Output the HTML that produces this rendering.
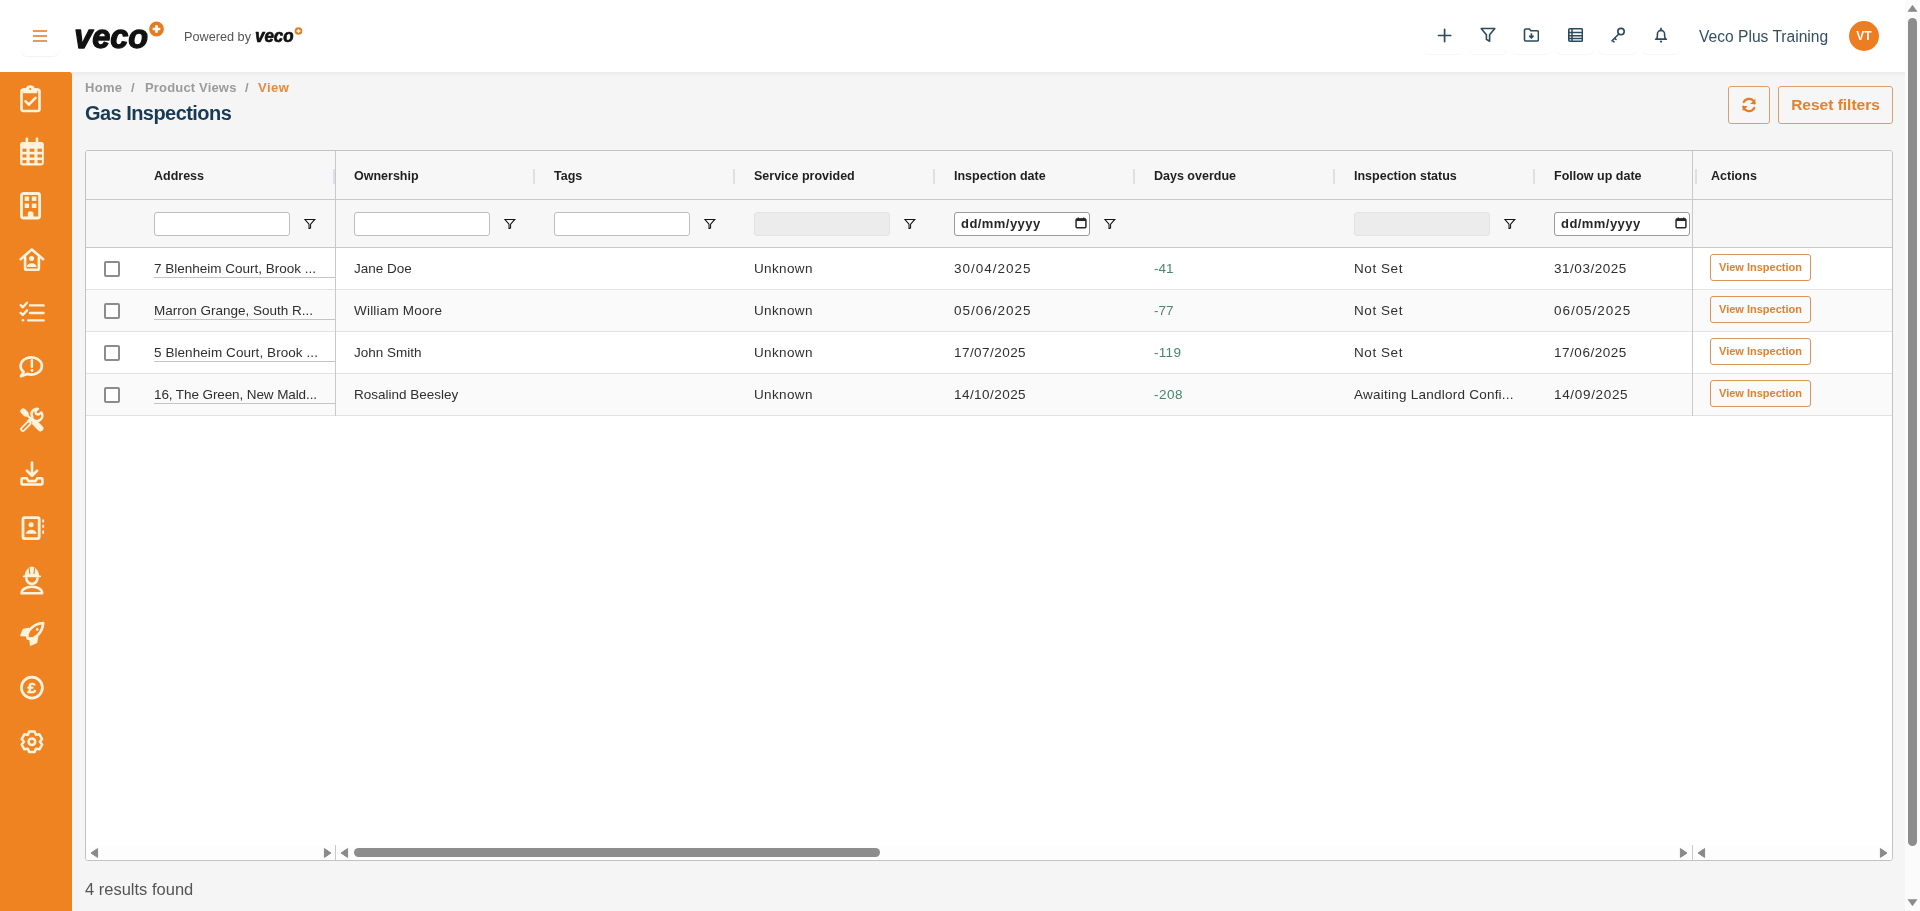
<!DOCTYPE html>
<html><head><meta charset="utf-8">
<style>
*{box-sizing:border-box;margin:0;padding:0}
html,body{width:1920px;height:911px;overflow:hidden;background:#f5f5f5;font-family:"Liberation Sans",sans-serif;color:#333;-webkit-font-smoothing:antialiased}
body>*{will-change:transform}
.abs{position:absolute}
#hdr{position:absolute;left:0;top:0;width:1905px;height:72px;background:#fff}
#side{position:absolute;left:0;top:72px;width:72px;height:839px;background:#ef8322;border-top-right-radius:3px}
#vscroll{position:absolute;left:1905px;top:0;width:15px;height:911px;background:#fbfbfb}
.hbtn{position:absolute;top:16px;width:38px;height:38px;border-radius:5px;background:#fff;box-shadow:0 1px 1px rgba(0,0,0,.045)}
.hbtn svg{position:absolute;left:11px;top:11px}
.sico{position:absolute;left:20px;width:24px;height:24px}
.bc{position:absolute;top:79.8px;font-size:13px;font-weight:bold;color:#9b9b9b;white-space:nowrap}
.title{position:absolute;left:85px;top:101.6px;font-size:20px;letter-spacing:-.55px;font-weight:bold;color:#173a55;white-space:nowrap}
.obtn{position:absolute;top:86px;height:38px;border:1px solid #d9a06c;border-radius:3px;color:#e2812f;font-weight:bold;font-size:15.5px;background:#f6f6f7}
#tbl{position:absolute;left:85px;top:150px;width:1808px;height:711px;background:#fff;border:1px solid #c2c2c5;border-radius:3px;overflow:hidden}
.hrow{position:absolute;left:0;top:0;width:1806px;height:49px;background:#f7f7f8;border-bottom:1px solid #c9c9cc}
.frow{position:absolute;left:0;top:49px;width:1806px;height:48px;background:#f7f7f8;border-bottom:1px solid #c9c9cc}
.drow{position:absolute;left:0;width:1806px;height:42px;border-bottom:1px solid #e2e2e4}
.th{position:absolute;top:18px;font-size:12.5px;font-weight:bold;color:#1f1f1f;white-space:nowrap}
.grip{position:absolute;top:18px;width:2px;height:15px;background:#dfe0e3}
.inp{position:absolute;top:12px;width:136px;height:24px;background:#fff;border:1px solid #bfbfc2;border-radius:3px}
.inp.dis{background:#ececed;border-color:#e3e3e5}
.fic{position:absolute;top:19px}
.td{position:absolute;top:13px;font-size:13.5px;color:#2f2f2f;white-space:nowrap}
.cb{position:absolute;left:18px;top:13px;width:16px;height:16px;border:2px solid #8c8c8c;border-radius:2px;background:#fff}
.vi{position:absolute;left:1624px;top:6px;width:101px;height:27px;border:1px solid #d9955a;border-radius:3px;font-size:11px;font-weight:bold;color:#e2822e;text-align:center;line-height:25px;white-space:nowrap}
.inp.date{border-color:#9a9a9d}
.dtxt{position:absolute;left:6px;top:2.6px;font-size:13px;font-weight:bold;color:#262626;letter-spacing:.45px}
.uline{position:absolute;left:68px;top:29px;width:181px;height:1px;background:#c4c4c6}
.vline{position:absolute;top:0;width:1px;background:#c9c9cc}
</style></head><body>

<div id="hdr">
  <div class="abs" style="left:21px;top:16px;width:38px;height:40px;border-radius:6px;background:#fff;box-shadow:0 1px 1px rgba(0,0,0,.05)">
    <div class="abs" style="left:12px;top:14px;width:14px;height:1.5px;background:#e59a5c"></div>
    <div class="abs" style="left:12px;top:19px;width:14px;height:1.5px;background:#e59a5c"></div>
    <div class="abs" style="left:12px;top:24px;width:14px;height:1.5px;background:#e59a5c"></div>
  </div>
  <svg class="abs" style="left:72px;top:15px" width="96" height="40" viewBox="0 0 96 40">
    <text x="2.2" y="33.3" font-family="Liberation Sans" font-weight="bold" font-style="italic" font-size="34" textLength="74" lengthAdjust="spacingAndGlyphs" fill="#111" stroke="#111" stroke-width="1.3" stroke-linejoin="round">veco</text>
    <circle cx="84.5" cy="14" r="7.4" fill="#e9791c"/>
    <path d="M84.5 10.2v7.6M80.7 14h7.6" stroke="#fff" stroke-width="2.6"/>
  </svg>
  <div class="abs" style="left:184px;top:29.8px;font-size:12.7px;color:#555;white-space:nowrap">Powered by</div>
  <svg class="abs" style="left:254px;top:24px" width="52" height="20" viewBox="0 0 52 20">
    <text x="1" y="17.6" font-family="Liberation Sans" font-weight="bold" font-style="italic" font-size="18" textLength="38.5" lengthAdjust="spacingAndGlyphs" fill="#111" stroke="#111" stroke-width="0.7" stroke-linejoin="round">veco</text>
    <circle cx="44.5" cy="7" r="3.8" fill="#e9791c"/>
    <path d="M44.5 5v4M42.5 7h4" stroke="#fff" stroke-width="1.3"/>
  </svg>
  <div class="hbtn" style="left:1425px"><svg width="16" height="16" viewBox="0 0 16 16"><path d="M8.6 2.4v12.2M2.5 8.5h12.2" stroke="#2c4a5b" stroke-width="1.7" stroke-linecap="round"/></svg></div>
  <div class="hbtn" style="left:1469px"><svg width="16" height="16" viewBox="0 0 16 16"><path d="M1.2 1.5h13.6L9.6 7.8v6.4L6.4 12.4V7.8Z" fill="none" stroke="#2c4a5b" stroke-width="1.6" stroke-linejoin="round"/></svg></div>
  <div class="hbtn" style="left:1512px"><svg width="16" height="16" viewBox="0 0 16 16"><path d="M1.5 3.2a1.2 1.2 0 0 1 1.2-1.2h3.6l1.6 1.8h6.3a1.2 1.2 0 0 1 1.2 1.2v7.8a1.2 1.2 0 0 1-1.2 1.2H2.7a1.2 1.2 0 0 1-1.2-1.2Z" fill="none" stroke="#2c4a5b" stroke-width="1.6" stroke-linejoin="round"/><path d="M8.4 6.3v4.2" stroke="#2c4a5b" stroke-width="1.6"/><path d="M6.3 8.6L8.4 10.8l2.1-2.2" fill="none" stroke="#2c4a5b" stroke-width="1.6"/></svg></div>
  <div class="hbtn" style="left:1556px"><svg width="16" height="16" viewBox="0 0 16 16"><rect x="1.8" y="1.8" width="13.6" height="12.4" rx="1" fill="none" stroke="#2c4a5b" stroke-width="1.6"/><path d="M1.8 5.6h13.6M1.8 8.8h13.6M1.8 11.6h13.6M5 1.8v12.4" stroke="#2c4a5b" stroke-width="1.5"/></svg></div>
  <div class="hbtn" style="left:1599px"><svg width="16" height="16" viewBox="0 0 16 16"><circle cx="11" cy="4.6" r="3.2" fill="none" stroke="#2c4a5b" stroke-width="1.6"/><path d="M8.8 7L2 13.8M2.4 13.4l1.6 1.4M4.6 11.2l1.4 1.3" stroke="#2c4a5b" stroke-width="1.6" stroke-linecap="round"/></svg></div>
  <div class="hbtn" style="left:1642px"><svg width="16" height="16" viewBox="0 0 16 16"><path d="M3.2 12.2c.9-.9 1.2-2 1.2-3.4V7a3.6 3.6 0 0 1 7.2 0v1.8c0 1.4.3 2.5 1.2 3.4Z" fill="none" stroke="#2c4a5b" stroke-width="1.6" stroke-linejoin="round"/><path d="M2.6 12.2h10.8" stroke="#2c4a5b" stroke-width="1.6" stroke-linecap="round"/><path d="M8 1.4v2" stroke="#2c4a5b" stroke-width="1.6" stroke-linecap="round"/><circle cx="8" cy="14.6" r="1.1" fill="#2c4a5b"/></svg></div>
  <div class="abs" style="left:1699px;top:28px;font-size:15.6px;color:#34505f;white-space:nowrap">Veco Plus Training</div>
  <div class="abs" style="left:1849px;top:21px;width:30px;height:30px;border-radius:50%;background:#ec7d22;color:#fff;font-size:12px;font-weight:bold;text-align:center;line-height:30px">VT</div>
</div>

<div class="abs" style="left:72px;top:72px;width:1833px;height:5px;background:linear-gradient(#ebebeb,#f5f5f5)"></div>
<div id="side"></div>
<div id="sicons">
<svg class="abs" style="left:12px;top:79px" width="40" height="40" viewBox="0 0 40 40" fill="none" stroke="#fff3de" stroke-width="2.6" stroke-linecap="round" stroke-linejoin="round"><rect x="9.5" y="10.6" width="18" height="21.4" rx="2"/>
<path d="M11.2 9.2h2.6a4.7 4.2 0 0 1 8.9 0h2.6v5.1H11.2Z" fill="#fff3de" stroke="none"/>
<circle cx="18.2" cy="10" r="1" fill="#ef8322" stroke="none"/>
<path d="M13.6 22.3l3.3 3.4 6.6-6.8" stroke-width="2.6"/></svg>
<svg class="abs" style="left:12px;top:132px" width="40" height="40" viewBox="0 0 40 40" fill="none" stroke="#fff3de" stroke-width="2.6" stroke-linecap="round" stroke-linejoin="round"><rect x="8.1" y="9.9" width="23.7" height="23.5" rx="2.4" fill="#fff3de" stroke="none"/>
<path d="M14.9 6.8v3.4M25 6.8v3.4" stroke-width="2.6"/>
<g fill="#ef8322" stroke="none"><rect x="10.5" y="16.7" width="4" height="3.1"/><rect x="17.6" y="16.7" width="4.8" height="3.1"/><rect x="25.5" y="16.7" width="4.4" height="3.1"/>
<rect x="10.5" y="22.4" width="4" height="3.1"/><rect x="17.6" y="22.4" width="4.8" height="3.1"/><rect x="25.5" y="22.4" width="4.4" height="3.1"/>
<rect x="10.5" y="28.1" width="4" height="3.1"/><rect x="17.6" y="28.1" width="4.8" height="3.1"/><rect x="25.5" y="28.1" width="4.4" height="3.1"/></g></svg>
<svg class="abs" style="left:12px;top:186px" width="40" height="40" viewBox="0 0 40 40" fill="none" stroke="#fff3de" stroke-width="2.6" stroke-linecap="round" stroke-linejoin="round"><rect x="9.5" y="7.5" width="18.1" height="24.5" rx="2" stroke-width="2.8"/>
<g fill="#fff3de" stroke="none"><rect x="12.7" y="10.5" width="4.4" height="4.4"/><rect x="19.8" y="10.5" width="4.6" height="4.4"/><rect x="12.7" y="17.6" width="4.4" height="4.4"/><rect x="19.8" y="17.6" width="4.6" height="4.4"/>
<path d="M15.8 32v-4a2.85 2.85 0 0 1 5.7 0v4Z"/></g></svg>
<svg class="abs" style="left:12px;top:240px" width="40" height="40" viewBox="0 0 40 40" fill="none" stroke="#fff3de" stroke-width="2.6" stroke-linecap="round" stroke-linejoin="round"><path d="M8.6 19.2L19.8 9.6L31.2 19.2"/>
<path d="M13.1 17.2v11a1.6 1.6 0 0 0 1.6 1.6h10.6a1.6 1.6 0 0 0 1.6-1.6v-11"/>
<circle cx="19.6" cy="18.4" r="2.5" fill="#fff3de" stroke="none"/>
<path d="M14.9 26.9a4.7 3.6 0 0 1 9.6 0Z" fill="#fff3de" stroke="none"/></svg>
<svg class="abs" style="left:12px;top:293px" width="40" height="40" viewBox="0 0 40 40" fill="none" stroke="#fff3de" stroke-width="2.6" stroke-linecap="round" stroke-linejoin="round"><path d="M8.6 12.2l2.2 2.1l4.2-4.6M8.6 19.9l2.2 2.1l4.2-4.6" stroke-width="2.3"/>
<path d="M18 12.4h13.6M18 20h13.6M16.2 27.4h15.4" stroke-width="2.4"/>
<circle cx="11" cy="27.2" r="1.3" fill="#fff3de" stroke="none"/></svg>
<svg class="abs" style="left:12px;top:346px" width="40" height="40" viewBox="0 0 40 40" fill="none" stroke="#fff3de" stroke-width="2.6" stroke-linecap="round" stroke-linejoin="round"><path d="M11.6 25.9A10.6 8.6 0 1 1 15.2 27.9L9 30.2Z" stroke-width="2.7"/>
<path d="M19.9 14.3v6.6" stroke-width="2.4"/>
<circle cx="20" cy="24.5" r="1.4" fill="#fff3de" stroke="none"/></svg>
<svg class="abs" style="left:12px;top:400px" width="40" height="40" viewBox="0 0 40 40" fill="none" stroke="#fff3de" stroke-width="2.6" stroke-linecap="round" stroke-linejoin="round"><path d="M11.2 11.2L13.8 13.8" stroke-width="5.6"/>
<path d="M13.8 13.8L20.6 20.6" stroke-width="2.2"/>
<path d="M23.2 23.2L28.4 28.4" stroke-width="6"/>
<path d="M10.9 29.1L16.9 23.1" stroke-width="5.4"/>
<path d="M10.9 29.1L16.9 23.1" stroke="#ef8322" stroke-width="1.6"/>
<path d="M17.6 21.6L20.4 18.8A5.3 5.3 0 0 0 29.4 12.4L26.6 14.6L24 13.8L23.4 11.2L26 8.8A5.3 5.3 0 0 0 20.4 16.8L16.2 21" stroke-width="2.4"/></svg>
<svg class="abs" style="left:12px;top:454px" width="40" height="40" viewBox="0 0 40 40" fill="none" stroke="#fff3de" stroke-width="2.6" stroke-linecap="round" stroke-linejoin="round"><path d="M20 8.6v12.2M14.9 16.7l5.1 5l5.1-5" stroke-width="2.6"/>
<path d="M9.6 25.3a1 1 0 0 1 1-1h4.2l1.6 2.8h7.2l1.6-2.8h4.2a1 1 0 0 1 1 1v4.2a1 1 0 0 1-1 1H10.6a1 1 0 0 1-1-1Z" stroke-width="2.6"/></svg>
<svg class="abs" style="left:12px;top:507px" width="40" height="40" viewBox="0 0 40 40" fill="none" stroke="#fff3de" stroke-width="2.6" stroke-linecap="round" stroke-linejoin="round"><rect x="11" y="10.6" width="16.2" height="21" rx="1.6" stroke-width="2.8"/>
<path d="M31.2 12.4v3M31.2 17.8v3M31.2 23.4v3.4" stroke-width="1.8" stroke-linecap="butt"/>
<circle cx="19.1" cy="17.7" r="2.5" fill="#fff3de" stroke="none"/>
<path d="M14 26.8a5.3 4 0 0 1 10.6 0Z" fill="#fff3de" stroke="none"/></svg>
<svg class="abs" style="left:12px;top:561px" width="40" height="40" viewBox="0 0 40 40" fill="none" stroke="#fff3de" stroke-width="2.6" stroke-linecap="round" stroke-linejoin="round"><path d="M12.6 15.8C12.6 10.6 15.6 6.4 19.9 5.6C24.2 6.4 27.2 10.6 27.2 15.8Z" fill="#fff3de" stroke="none"/>
<path d="M17.2 7.2L17.8 12.6M22.6 7.2L22 12.6" stroke="#ef8322" stroke-width="1.1"/>
<path d="M11.6 15.4h16.6" stroke-width="1.6"/>
<path d="M14.4 17.4a5.5 5.4 0 0 0 11 0" stroke-width="2.6"/>
<path d="M9.6 32.2c0-3.8 4.2-6.4 10.3-6.4s10.3 2.6 10.3 6.4Z" stroke-width="2.6"/></svg>
<svg class="abs" style="left:12px;top:614px" width="40" height="40" viewBox="0 0 40 40" fill="none" stroke="#fff3de" stroke-width="2.6" stroke-linecap="round" stroke-linejoin="round"><path d="M15.6 24.4C13.8 17.4 21 9.8 31.2 9C30.4 19.2 22.6 26.2 15.6 24.4Z" stroke-width="2.7"/>
<circle cx="25.2" cy="15.4" r="1.4" fill="#fff3de" stroke="none"/>
<path d="M16.4 14.6L11.4 15.6L9 21.4L14 21.8Z" fill="#fff3de" stroke-width="1.6"/>
<path d="M25.4 23.6L24.4 28.6L18.6 31L18.2 26Z" fill="#fff3de" stroke-width="1.6"/></svg>
<svg class="abs" style="left:12px;top:668px" width="40" height="40" viewBox="0 0 40 40" fill="none" stroke="#fff3de" stroke-width="2.6" stroke-linecap="round" stroke-linejoin="round"><circle cx="19.9" cy="19.6" r="10.5" stroke-width="2.7"/>
<text x="19.9" y="25.2" font-family="Liberation Sans" font-weight="bold" font-size="15.5" text-anchor="middle" fill="#fff3de" stroke="#fff3de" stroke-width=".5">£</text></svg>
<svg class="abs" style="left:12px;top:722px" width="40" height="40" viewBox="0 0 40 40" fill="none" stroke="#fff3de" stroke-width="2.6" stroke-linecap="round" stroke-linejoin="round"><path d="M15.92 12.86 L17.17 9.56 L22.63 9.56 L23.88 12.86 L23.92 12.89 L27.41 12.32 L30.13 17.04 L27.90 19.77 L27.90 19.83 L30.13 22.56 L27.41 27.28 L23.92 26.71 L23.88 26.74 L22.63 30.04 L17.17 30.04 L15.92 26.74 L15.88 26.71 L12.39 27.28 L9.67 22.56 L11.90 19.83 L11.90 19.77 L9.67 17.04 L12.39 12.32 L15.88 12.89Z" stroke-width="2.5"/>
<circle cx="19.9" cy="19.8" r="3.3" stroke-width="2.5"/></svg>
</div>
<div id="vscroll">
  <svg class="abs" style="left:0;top:0" width="15" height="15" viewBox="0 0 15 15"><path d="M3 11.4h9L7.5 5.2Z" fill="#8a8a8a" stroke="#8a8a8a" stroke-width=".6" stroke-linejoin="round"/></svg>
  <div class="abs" style="left:3px;top:18px;width:9px;height:828px;border-radius:4.5px;background:#8c8c8c"></div>
  <svg class="abs" style="left:0;top:896px" width="15" height="15" viewBox="0 0 15 15"><path d="M3 3.6h9L7.5 9.8Z" fill="#8a8a8a" stroke="#8a8a8a" stroke-width=".6" stroke-linejoin="round"/></svg>
</div>

<div class="bc" style="left:85px;letter-spacing:.3px">Home</div><div class="bc" style="left:131px">/</div><div class="bc" style="left:144.5px;letter-spacing:.17px">Product Views</div><div class="bc" style="left:244.5px">/</div><div class="bc" style="left:257.5px;color:#e98a3a;letter-spacing:.5px">View</div>
<div class="title">Gas Inspections</div>

<div class="obtn" style="left:1728px;width:42px"><svg class="abs" style="left:12px;top:10px" width="16" height="16" viewBox="0 0 16 16"><path d="M13.6 6.4A5.8 5.8 0 0 0 2.8 5" fill="none" stroke="#e47d25" stroke-width="2.2" stroke-linecap="round"/><path d="M2.4 9.6A5.8 5.8 0 0 0 13.2 11" fill="none" stroke="#e47d25" stroke-width="2.2" stroke-linecap="round"/><path d="M14.4 1.8v5.2H9.2Z" fill="#e47d25"/><path d="M1.6 14.2V9h5.2Z" fill="#e47d25"/></svg></div>
<div class="obtn" style="left:1778px;width:115px;text-align:center;line-height:36px">Reset filters</div>
<div id="tbl">
<!--TBL-->
<div class="hrow">
<div class="th" style="left:68px">Address</div>
<div class="th" style="left:268px">Ownership</div>
<div class="th" style="left:468px">Tags</div>
<div class="th" style="left:668px">Service provided</div>
<div class="th" style="left:868px">Inspection date</div>
<div class="th" style="left:1068px">Days overdue</div>
<div class="th" style="left:1268px">Inspection status</div>
<div class="th" style="left:1468px">Follow up date</div>
<div class="th" style="left:1625px">Actions</div>
<div class="grip" style="left:247px"></div>
<div class="grip" style="left:447px"></div>
<div class="grip" style="left:647px"></div>
<div class="grip" style="left:847px"></div>
<div class="grip" style="left:1047px"></div>
<div class="grip" style="left:1247px"></div>
<div class="grip" style="left:1447px"></div>
<div class="grip" style="left:1609px"></div>
</div>
<div class="frow">
<div class="inp" style="left:68px"></div>
<svg class="fic" style="left:218px;top:18px" width="12" height="11" viewBox="0 0 12 11"><path d="M0.8 1.4h10L6.6 6.1v3.9L5 10.8V6.1Z" fill="none" stroke="#111" stroke-width="1.05" stroke-linejoin="miter"/></svg>
<div class="inp" style="left:268px"></div>
<svg class="fic" style="left:418px;top:18px" width="12" height="11" viewBox="0 0 12 11"><path d="M0.8 1.4h10L6.6 6.1v3.9L5 10.8V6.1Z" fill="none" stroke="#111" stroke-width="1.05" stroke-linejoin="miter"/></svg>
<div class="inp" style="left:468px"></div>
<svg class="fic" style="left:618px;top:18px" width="12" height="11" viewBox="0 0 12 11"><path d="M0.8 1.4h10L6.6 6.1v3.9L5 10.8V6.1Z" fill="none" stroke="#111" stroke-width="1.05" stroke-linejoin="miter"/></svg>
<div class="inp dis" style="left:668px"></div>
<svg class="fic" style="left:818px;top:18px" width="12" height="11" viewBox="0 0 12 11"><path d="M0.8 1.4h10L6.6 6.1v3.9L5 10.8V6.1Z" fill="none" stroke="#111" stroke-width="1.05" stroke-linejoin="miter"/></svg>
<div class="inp date" style="left:868px"><span class="dtxt">dd/mm/yyyy</span><svg class="abs" style="left:120px;top:3px" width="12" height="13" viewBox="0 0 12 13"><rect x="1.1" y="3" width="9.8" height="8.8" rx="1" fill="none" stroke="#262626" stroke-width="1.5"/><rect x="1" y="2.6" width="10" height="2.4" fill="#262626"/><path d="M3.3 1.4v2M8.7 1.4v2" stroke="#262626" stroke-width="1.3"/></svg></div>
<svg class="fic" style="left:1018px;top:18px" width="12" height="11" viewBox="0 0 12 11"><path d="M0.8 1.4h10L6.6 6.1v3.9L5 10.8V6.1Z" fill="none" stroke="#111" stroke-width="1.05" stroke-linejoin="miter"/></svg>
<div class="inp dis" style="left:1268px"></div>
<svg class="fic" style="left:1418px;top:18px" width="12" height="11" viewBox="0 0 12 11"><path d="M0.8 1.4h10L6.6 6.1v3.9L5 10.8V6.1Z" fill="none" stroke="#111" stroke-width="1.05" stroke-linejoin="miter"/></svg>
<div class="inp date" style="left:1468px"><span class="dtxt">dd/mm/yyyy</span><svg class="abs" style="left:120px;top:3px" width="12" height="13" viewBox="0 0 12 13"><rect x="1.1" y="3" width="9.8" height="8.8" rx="1" fill="none" stroke="#262626" stroke-width="1.5"/><rect x="1" y="2.6" width="10" height="2.4" fill="#262626"/><path d="M3.3 1.4v2M8.7 1.4v2" stroke="#262626" stroke-width="1.3"/></svg></div>
</div>
<div class="drow" style="top:97px;background:#fff">
<div class="cb"></div>
<div class="td" style="left:68px">7 Blenheim Court, Brook ...</div>
<div class="td" style="left:268px">Jane Doe</div>
<div class="td" style="left:668px;letter-spacing:0.37px">Unknown</div>
<div class="td" style="left:868px;letter-spacing:1.0px">30/04/2025</div>
<div class="td" style="left:1068px;color:#47876a">-41</div>
<div class="td" style="left:1268px;letter-spacing:0.57px">Not Set</div>
<div class="td" style="left:1468px;letter-spacing:0.53px">31/03/2025</div>
<div class="uline"></div>
<div class="vi">View Inspection</div>
</div>
<div class="drow" style="top:139px;background:#fafafa">
<div class="cb"></div>
<div class="td" style="left:68px">Marron Grange, South R...</div>
<div class="td" style="left:268px;letter-spacing:0.2px">William Moore</div>
<div class="td" style="left:668px;letter-spacing:0.37px">Unknown</div>
<div class="td" style="left:868px;letter-spacing:1.0px">05/06/2025</div>
<div class="td" style="left:1068px;color:#47876a">-77</div>
<div class="td" style="left:1268px;letter-spacing:0.57px">Not Set</div>
<div class="td" style="left:1468px;letter-spacing:0.96px">06/05/2025</div>
<div class="uline"></div>
<div class="vi">View Inspection</div>
</div>
<div class="drow" style="top:181px;background:#fff">
<div class="cb"></div>
<div class="td" style="left:68px;letter-spacing:0.07px">5 Blenheim Court, Brook ...</div>
<div class="td" style="left:268px">John Smith</div>
<div class="td" style="left:668px;letter-spacing:0.37px">Unknown</div>
<div class="td" style="left:868px;letter-spacing:0.45px">17/07/2025</div>
<div class="td" style="left:1068px;letter-spacing:0.3px;color:#47876a">-119</div>
<div class="td" style="left:1268px;letter-spacing:0.57px">Not Set</div>
<div class="td" style="left:1468px;letter-spacing:0.53px">17/06/2025</div>
<div class="uline"></div>
<div class="vi">View Inspection</div>
</div>
<div class="drow" style="top:223px;background:#fafafa">
<div class="cb"></div>
<div class="td" style="left:68px;letter-spacing:-0.1px">16, The Green, New Mald...</div>
<div class="td" style="left:268px">Rosalind Beesley</div>
<div class="td" style="left:668px;letter-spacing:0.37px">Unknown</div>
<div class="td" style="left:868px;letter-spacing:0.45px">14/10/2025</div>
<div class="td" style="left:1068px;letter-spacing:0.5px;color:#47876a">-208</div>
<div class="td" style="left:1268px;letter-spacing:0.24px">Awaiting Landlord Confi...</div>
<div class="td" style="left:1468px;letter-spacing:0.67px">14/09/2025</div>
<div class="uline"></div>
<div class="vi">View Inspection</div>
</div>
<div class="abs" style="left:0;top:694px;width:1806px;height:15px;background:#fdfdfd"></div>
<svg class="abs" style="left:2px;top:695px" width="12" height="14" viewBox="0 0 12 14"><path d="M9.6 2.6v8.8L3 7Z" fill="#8a8a8a" stroke="#8a8a8a" stroke-width="1" stroke-linejoin="round"/></svg>
<svg class="abs" style="left:236px;top:695px" width="12" height="14" viewBox="0 0 12 14"><path d="M2.4 2.6v8.8L9 7Z" fill="#8a8a8a" stroke="#8a8a8a" stroke-width="1" stroke-linejoin="round"/></svg>
<div class="vline" style="left:249px;top:694px;height:15px"></div>
<svg class="abs" style="left:252px;top:695px" width="12" height="14" viewBox="0 0 12 14"><path d="M9.6 2.6v8.8L3 7Z" fill="#8a8a8a" stroke="#8a8a8a" stroke-width="1" stroke-linejoin="round"/></svg>
<div class="abs" style="left:268px;top:697px;width:526px;height:9px;border-radius:4.5px;background:#8c8c8c"></div>
<svg class="abs" style="left:1592px;top:695px" width="12" height="14" viewBox="0 0 12 14"><path d="M2.4 2.6v8.8L9 7Z" fill="#8a8a8a" stroke="#8a8a8a" stroke-width="1" stroke-linejoin="round"/></svg>
<div class="vline" style="left:1606px;top:694px;height:15px"></div>
<svg class="abs" style="left:1609px;top:695px" width="12" height="14" viewBox="0 0 12 14"><path d="M9.6 2.6v8.8L3 7Z" fill="#8a8a8a" stroke="#8a8a8a" stroke-width="1" stroke-linejoin="round"/></svg>
<svg class="abs" style="left:1792px;top:695px" width="12" height="14" viewBox="0 0 12 14"><path d="M2.4 2.6v8.8L9 7Z" fill="#8a8a8a" stroke="#8a8a8a" stroke-width="1" stroke-linejoin="round"/></svg>
<div class="vline" style="left:249px;height:265px"></div>
<div class="vline" style="left:1606px;height:265px"></div>
<!--/TBL-->
</div>

<div class="abs" style="left:85px;top:880px;font-size:16.5px;color:#555">4 results found</div>
</body></html>
